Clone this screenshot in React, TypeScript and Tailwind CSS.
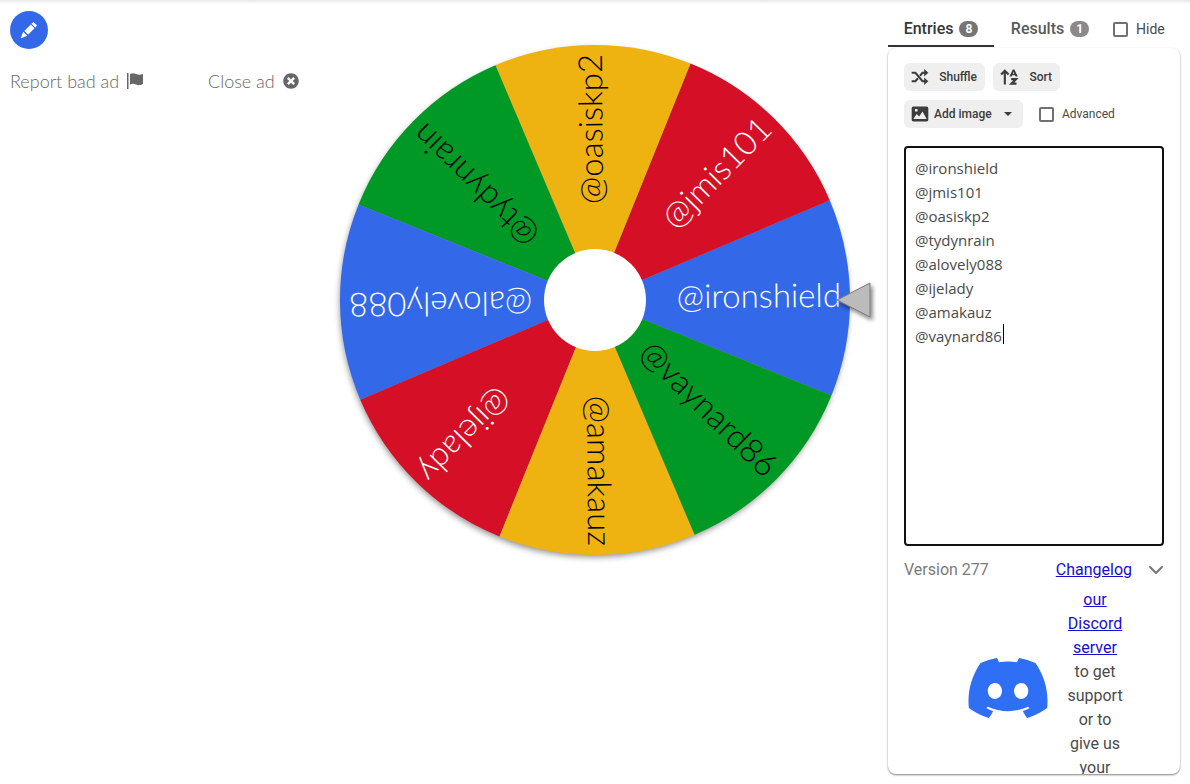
import { useState } from 'react';
import { BsPencilFill } from 'react-icons/bs';
import { FaDiscord, FaTimesCircle } from 'react-icons/fa';
import { ChevronDown } from 'lucide-react';

const names = ['@ironshield', '@jmis101', '@oasiskp2', '@tydynrain', '@alovely088', '@ijelady', '@amakauz', '@vaynard86'];

const sliceColors = [
    { fill: '#3369e8', text: '#ffffff' },
    { fill: '#d50f25', text: '#ffffff' },
    { fill: '#eeb211', text: '#000000' },
    { fill: '#009925', text: '#000000' },
];

const CENTER = 293;
const RADIUS = 255;
const TILT = -0.5;

const point = (angle: number) => {
    const rad = (angle * Math.PI) / 180;
    return `${CENTER + RADIUS * Math.cos(rad)} ${CENTER + RADIUS * Math.sin(rad)}`;
};

const Wheel = ({ entries }: { entries: string[] }) => {
    const step = 360 / entries.length;

    return (
        <svg viewBox="0 0 586 586" className="w-full max-w-[586px]" role="img" aria-label="Wheel of names">
            <defs>
                <filter id="wheelShadow" x="-10%" y="-10%" width="120%" height="120%">
                    <feDropShadow dx="-1" dy="3" stdDeviation="3" floodColor="#000000" floodOpacity="0.45" />
                </filter>
                <filter id="pointerShadow" x="-30%" y="-30%" width="170%" height="170%">
                    <feDropShadow dx="2" dy="3" stdDeviation="2" floodColor="#000000" floodOpacity="0.5" />
                </filter>
            </defs>
            <circle cx={CENTER} cy={CENTER} r={RADIUS - 1} fill="#999999" filter="url(#wheelShadow)" />
            {entries.map((name, i) => {
                const mid = TILT - i * step;
                const color = sliceColors[i % sliceColors.length];
                return (
                    <path
                        key={name}
                        d={`M${CENTER} ${CENTER}L${point(mid - step / 2)}A${RADIUS} ${RADIUS} 0 0 1 ${point(mid + step / 2)}Z`}
                        fill={color.fill}
                    />
                );
            })}
            {entries.map((name, i) => (
                <text
                    key={name}
                    x={CENTER + 246}
                    y={CENTER + 9}
                    textAnchor="end"
                    transform={`rotate(${TILT - i * step} ${CENTER} ${CENTER})`}
                    fill={sliceColors[i % sliceColors.length].text}
                    className="font-[Lato,sans-serif] text-[33px] font-light"
                >
                    {name}
                </text>
            ))}
            <circle cx={CENTER} cy={CENTER} r="51" fill="#ffffff" />
            <path d="M535 293L568 276V310Z" fill="#bbbbbb" stroke="#777777" strokeWidth="1" filter="url(#pointerShadow)" />
        </svg>
    );
};

const FlagIcon = () => (
    <svg viewBox="0 0 16 16" className="h-4 w-4" fill="currentColor">
        <path d="M0 0H1.500V16H0ZM3 1C5.500 0 7 0 9 1C11.500 2 13 2 16 1V11C13 12.500 11 12.500 9 11.500C7 10.500 5.500 10.500 3 11.500Z" />
    </svg>
);

const ShuffleIcon = () => (
    <svg viewBox="0 0 24 24" className="h-5 w-5" fill="none" stroke="currentColor" strokeWidth="2.4">
        <path d="M2 7H6.500L15 17H18M2 17H6.500L9.500 13.500M12 10.500L15 7H18" />
        <path d="M17 2.500L22 7L17 11.500ZM17 12.500L22 17L17 21.500Z" fill="currentColor" stroke="none" />
    </svg>
);

const SortIcon = () => (
    <svg viewBox="0 0 24 24" className="h-5 w-5" fill="none" stroke="currentColor" strokeWidth="2.600">
        <path d="M7 21V5M2.500 9L7 4.500L11.500 9" />
        <path d="M14.500 14.500H20.500L15 20H21" />
        <path d="M12.500 11.500L16.500 3H18.500L22.500 11.500H19.800L19.200 10H15.800L15.200 11.500ZM16.600 8H18.400L17.500 5.800Z" fill="currentColor" fillRule="evenodd" stroke="none" />
    </svg>
);

const ImageIcon = () => (
    <svg viewBox="0 0 24 24" className="h-5 w-5" fill="currentColor">
        <path
            fillRule="evenodd"
            d="M4 3H20A2 2 0 0 1 22 5V19A2 2 0 0 1 20 21H4A2 2 0 0 1 2 19V5A2 2 0 0 1 4 3ZM4 18H20L15 9L11 15L8 12ZM6 6V9H9V6Z"
        />
    </svg>
);

const CheckBox = ({ label, className }: { label: string; className: string }) => (
    <label className={`flex items-center ${className}`}>
        <input type="checkbox" className="h-[15px] w-[15px] appearance-none rounded-[2px] border-2 border-[#707070] bg-white checked:bg-[#707070]" />
        {label}
    </label>
);

const toolButton = 'flex h-7 items-center rounded-md bg-[#efefef] text-xs font-medium text-[#3c3c3c]';

export default function App() {
    const [text, setText] = useState(names.join('\n'));

    return (
        <div className="flex h-screen flex-col overflow-hidden bg-white font-[Roboto,sans-serif] text-[#4a4a4a]">
            <div className="h-1 shrink-0 bg-gradient-to-b from-[#e8e8e8] to-white" />
            <div className="flex min-h-0 flex-1">
                <div className="w-[302px] shrink-0 px-[10px] pt-[7px]">
                    <button aria-label="Customize" className="flex h-[38px] w-[38px] items-center justify-center rounded-full bg-[#3369e8] text-white">
                        <BsPencilFill className="h-4 w-4" />
                    </button>
                    <div className="mt-5 flex items-center font-[Lato,sans-serif] text-lg leading-6 font-light whitespace-nowrap text-[#666666]">
                        <button className="flex w-[198px] shrink-0 items-center gap-2">
                            Report bad ad
                            <FlagIcon />
                        </button>
                        <button className="flex shrink-0 items-center gap-2">
                            Close ad
                            <FaTimesCircle className="h-4 w-4" />
                        </button>
                    </div>
                </div>

                <main className="flex min-w-0 flex-1 items-start justify-center pt-[3px]">
                    <Wheel entries={names} />
                </main>

                <aside className="mr-[10px] flex w-[292px] shrink-0 flex-col pt-[7px] pb-[10px]">
                    <div className="flex h-9 shrink-0 items-stretch text-base">
                        <button className="flex w-[106px] items-center justify-center gap-[6px] border-b-2 border-[#333333] pt-[2px] font-medium text-[#363636]">
                            Entries
                            <span className="rounded-full bg-[#757575] px-[6px] text-xs leading-4 font-bold text-white">8</span>
                        </button>
                        <button className="flex w-[112px] items-center justify-center gap-[6px] border-b-2 border-transparent pt-[2px] font-medium text-[#5a5a5a]">
                            Results
                            <span className="rounded-full bg-[#8a8a8a] px-[6px] text-xs leading-4 font-bold text-white">1</span>
                        </button>
                        <CheckBox label="Hide" className="ml-[7px] gap-2 text-sm" />
                    </div>

                    <div className="mt-px flex min-h-0 flex-1 flex-col overflow-hidden rounded-lg px-4 pt-[15px] shadow-[0_1px_2px_rgba(0,0,0,0.5)]">
                        <div className="flex shrink-0 flex-wrap gap-x-2 gap-y-[9px]">
                            <button className={`${toolButton} w-[81px] justify-between pr-2 pl-[6px]`}>
                                <ShuffleIcon />
                                Shuffle
                            </button>
                            <button className={`${toolButton} w-[67px] justify-between pr-2 pl-[6px]`}>
                                <SortIcon />
                                Sort
                            </button>
                            <button className={`${toolButton} w-[119px] gap-1 px-[6px]`}>
                                <ImageIcon />
                                Add image
                                <span className="ml-2 border-x-4 border-t-4 border-x-transparent border-t-[#3c3c3c]" />
                            </button>
                            <CheckBox label="Advanced" className="ml-2 gap-2 text-xs" />
                        </div>

                        <div className="relative mt-[18px] shrink-0">
                            <textarea
                                aria-label="Entries"
                                spellCheck={false}
                                value={text}
                                onChange={(e) => setText(e.target.value)}
                                className="block h-[400px] w-full resize-none rounded border-2 border-[#111111] px-[9px] py-2 font-['Open_Sans',sans-serif] text-[15px] leading-6 text-[#4a4a4a] outline-none"
                            />
                            <span className="absolute top-[178px] left-[99px] h-5 w-px bg-black" />
                        </div>

                        <div className="mt-3 flex shrink-0 items-center text-base leading-6">
                            <span className="text-[#7a7a7a]">Version 277</span>
                            <a href="#changelog" className="ml-auto text-[#1a0dce] underline">Changelog</a>
                            <button aria-label="Expand" className="-mr-1 ml-3">
                                <ChevronDown className="h-6 w-6 text-[#757575]" />
                            </button>
                        </div>

                        <div className="mt-[6px] flex shrink-0 pl-[61px]">
                            <FaDiscord className="mt-[57px] h-[86px] w-[86px] shrink-0 text-[#2f6ff5]" />
                            <p className="ml-[14px] w-[60px] text-center text-base leading-6">
                                <a href="#discord" className="text-[#1a0dce] underline">our Discord server</a> to get support or to give us your
                            </p>
                        </div>
                    </div>
                </aside>
            </div>
        </div>
    );
}
